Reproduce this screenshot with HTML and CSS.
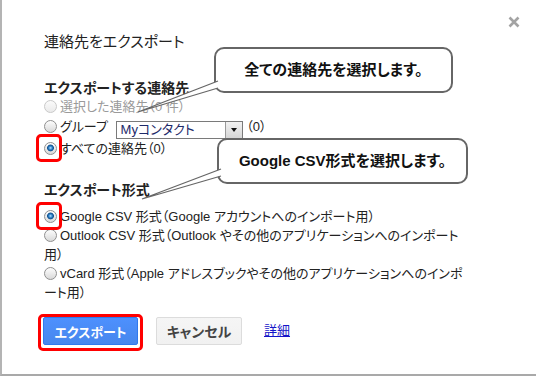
FILE: index.html
```html
<!DOCTYPE html>
<html lang="ja">
<head>
    <meta charset="UTF-8">
    <meta name="viewport" content="width=device-width, initial-scale=1.0">
    <title>連絡先をエクスポート</title>
    <link rel="stylesheet" href="styles.css">
</head>
<body>
    <div class="dialog">
        <svg class="close" width="12" height="12" viewBox="0 0 12 12">
            <path d="M1.5 1.5 L10.5 10.5 M10.5 1.5 L1.5 10.5" stroke="#a3a3a3" stroke-width="2.6" fill="none"/>
        </svg>

        <h1 class="title">連絡先をエクスポート</h1>

        <h2 class="section">エクスポートする連絡先</h2>
        <label class="opt is-disabled"><input type="radio" name="who" disabled>選択した連絡先（0 件）</label>
        <label class="opt opt-group"><input type="radio" name="who">グループ <span class="select">Myコンタクト<span class="select-arrow"></span></span> （0）</label>
        <label class="opt"><span class="mark"><input type="radio" name="who" checked></span>すべての連絡先（0）</label>

        <h2 class="section section-format">エクスポート形式</h2>
        <label class="opt"><span class="mark"><input type="radio" name="fmt" checked></span>Google CSV 形式（Google アカウントへのインポート用）</label>
        <label class="opt"><input type="radio" name="fmt">Outlook CSV 形式（Outlook やその他のアプリケーションへのインポート用）</label>
        <label class="opt"><input type="radio" name="fmt">vCard 形式（Apple アドレスブックやその他のアプリケーションへのインポート用）</label>

        <div class="actions">
            <span class="btn-mark"><button class="btn btn-primary">エクスポート</button></span>
            <button class="btn btn-cancel">キャンセル</button>
            <a class="more" href="#">詳細</a>
        </div>

        <div class="callout callout-all">全ての連絡先を選択します。</div>
        <div class="callout callout-csv">Google CSV形式を選択します。</div>
        <svg class="tails" width="536" height="377">
            <path d="M218 81 L138 112 L218 88" fill="#fff" stroke="#666" stroke-width="1.3"/>
            <path d="M221 169 L142 199 L221 176" fill="#fff" stroke="#666" stroke-width="1.3"/>
        </svg>
    </div>
</body>
</html>
```

FILE: styles.css
```css
html, body {
    margin: 0;
    padding: 0;
    background: #fff;
}

body {
    font-family: "Liberation Sans", "Noto Sans CJK JP", sans-serif;
    font-feature-settings: "palt";
    font-size: 13px;
    color: #222;
    overflow: hidden;
}

.dialog {
    position: relative;
    box-sizing: border-box;
    width: 536px;
    height: 376px;
    padding: 32px 71px 0 42px;
    border-left: 2px solid #b4b4b4;
    border-bottom: 2px solid #a9a9a9;
    line-break: loose;
}

.close {
    position: absolute;
    left: 506px;
    top: 16px;
}

.title {
    margin: 0;
    font-size: 15px;
    font-weight: normal;
    line-height: 20px;
}

.section {
    margin: 27px 0 0;
    font-size: 14px;
    font-weight: bold;
    line-height: 18px;
}

.section-format {
    margin: 23px 0 8px;
}

.opt {
    display: block;
    line-height: 19px;
}

.opt-group {
    line-height: 22px;
}

.opt input {
    -webkit-appearance: none;
    appearance: none;
    box-sizing: border-box;
    width: 13px;
    height: 13px;
    margin: 0 3px 0 0;
    vertical-align: -2px;
    border: 1px solid #8f8f8f;
    border-radius: 50%;
    background: linear-gradient(#fdfdfd, #d9d9d9);
}

.opt input:checked {
    background:
        radial-gradient(circle at 50% 45%, #bfe4ff 0, #3d8fd3 1.5px, #0d4f8e 3px, rgba(13, 79, 142, 0) 3.8px),
        linear-gradient(#fdfdfd, #d9d9d9);
}

.is-disabled {
    color: #9a9a9a;
}

.is-disabled input {
    border-color: #c9c9c9;
    background: linear-gradient(#fbfbfb, #eaeaea);
}

.mark {
    position: relative;
    display: inline-block;
    line-height: 0;
    margin-right: 3px;
}

.mark input {
    margin: 0;
}

.mark::after {
    content: "";
    position: absolute;
    top: -8px;
    left: -8px;
    right: -5px;
    bottom: -7px;
    border: 3px solid #f00;
    border-radius: 5px;
}

.select {
    position: relative;
    display: inline-block;
    box-sizing: border-box;
    width: 127px;
    height: 18px;
    margin-left: 4px;
    padding-left: 4px;
    line-height: 16px;
    border: 1px solid #7a7a7a;
    vertical-align: -3px;
    color: #1d2a6a;
}

.select-arrow {
    position: absolute;
    top: 0;
    right: 0;
    width: 16px;
    height: 16px;
    background: linear-gradient(#f2f2f2, #d6d6d6);
    border-left: 1px solid #9a9a9a;
}

.select-arrow::after {
    content: "";
    position: absolute;
    left: 5px;
    top: 6px;
    border-left: 3.5px solid transparent;
    border-right: 3.5px solid transparent;
    border-top: 4px solid #111;
}

.actions {
    display: flex;
    align-items: flex-start;
    margin-top: 12px;
}

.btn-mark {
    display: inline-block;
    margin-left: -6px;
    padding: 0 2px 3px;
    border: 3px solid #f00;
    border-radius: 5px;
}

.btn {
    display: block;
    box-sizing: border-box;
    height: 28px;
    padding: 0;
    border-radius: 2px;
    font-family: inherit;
    font-feature-settings: "palt";
    font-size: 13px;
    font-weight: bold;
    white-space: nowrap;
}

.btn-primary {
    width: 95px;
    color: #fff;
    background: linear-gradient(#4d90fe, #4787ed);
    border: 1px solid #3079ed;
}

.btn-cancel {
    width: 86px;
    margin: 3px 0 0 13px;
    color: #444;
    background: linear-gradient(#f5f5f5, #f1f1f1);
    border: 1px solid #dcdcdc;
    font-size: 14px;
}

.more {
    margin: 9px 0 0 22px;
    color: #1515c8;
    line-height: 16px;
}

.callout {
    position: absolute;
    box-sizing: border-box;
    height: 46px;
    border: 2px solid #666;
    border-radius: 10px;
    background: #fff;
    font-size: 15px;
    font-weight: bold;
    line-height: 42px;
    text-align: center;
    color: #111;
}

.callout-all {
    left: 212px;
    top: 47px;
    width: 239px;
}

.callout-csv {
    left: 215px;
    top: 138px;
    width: 251px;
}

.tails {
    position: absolute;
    top: 0;
    left: -2px;
    pointer-events: none;
}
```
